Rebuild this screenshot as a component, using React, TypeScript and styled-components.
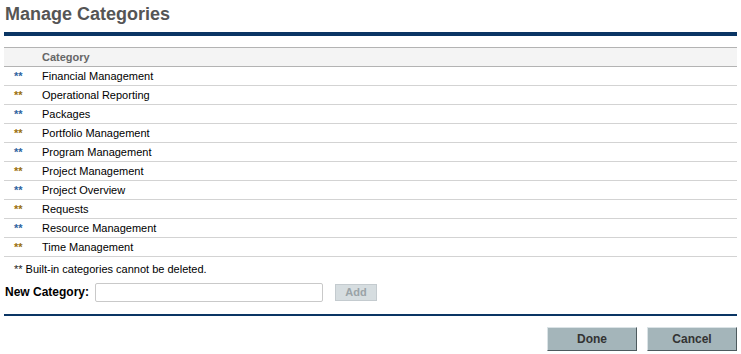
import styled, { createGlobalStyle } from "styled-components"

const GlobalStyle = createGlobalStyle`
    body {
        margin: 0;
        background: #fff;
        font-family: "Liberation Sans", Arial, sans-serif;
        font-size: 11px;
        color: #000;
    }
`

const Page = styled.div`
    width: 741px;
    height: 354px;
    padding: 0 4px;
    box-sizing: border-box;
`

const Title = styled.h1`
    margin: 0;
    padding: 4px 0 0 1px;
    height: 32px;
    box-sizing: border-box;
    font-size: 18px;
    font-weight: bold;
    color: #555;
    line-height: 20px;
`

const Rule = styled.div<{ $h: number }>`
    height: ${p => p.$h}px;
    background: #0a3564;
    width: 733px;
`

const Table = styled.table`
    width: 733px;
    margin-top: 11px;
    border-collapse: collapse;
    th, td {
        padding: 0;
        height: 18px;
        text-align: left;
        white-space: nowrap;
    }
    th {
        background: #f4f4f4;
        border-top: 1px solid #b3b3b3;
        border-bottom: 1px solid #b3b3b3;
        color: #666;
        font-weight: bold;
        font-size: 11px;
    }
    td {
        border-bottom: 1px solid #d3d3d3;
    }
`

const Mark = styled.td<{ $tone: "blue" | "gold" }>`
    width: 28px;
    padding-left: 10px !important;
    font-size: 11px;
    font-weight: bold;
    color: ${p => (p.$tone === "blue" ? "#2f64a0" : "#9a6f0e")};
`

const Note = styled.div`
    padding: 5px 0 0 10px;
    height: 20px;
    box-sizing: border-box;
    line-height: 14px;
    span {
        color: #222;
    }
`

const FormRow = styled.div`
    display: flex;
    align-items: center;
    height: 30px;
    margin-bottom: 7px;
    padding-left: 1px;
`

const Label = styled.label`
    width: 90px;
    font-weight: bold;
    font-size: 12px;
    color: #000;
`

const TextInput = styled.input`
    width: 228px;
    height: 19px;
    box-sizing: border-box;
    border: 1px solid #c9c9c9;
    border-radius: 2px;
    padding: 0 3px;
    margin: 0 12px 0 0;
`

const AddButton = styled.button`
    width: 42px;
    height: 17px;
    box-sizing: border-box;
    background: #d6dde0;
    border: 1px solid #c4cbcf;
    font-family: inherit;
    font-size: 11px;
    font-weight: bold;
    color: #9aa3a7;
    padding: 0;
`

const Actions = styled.div`
    display: flex;
    justify-content: flex-end;
    gap: 10px;
    padding-top: 11px;
`

const ActionButton = styled.button`
    width: 90px;
    height: 24px;
    box-sizing: border-box;
    background: #a4b5ba;
    border: 1px solid;
    border-color: #dbe3e6 #4d5a5e #4d5a5e #dbe3e6;
    font-family: inherit;
    font-size: 12px;
    font-weight: bold;
    color: #333;
    padding: 0;
`

const categories: [string, "blue" | "gold"][] = [
    ["Financial Management", "blue"],
    ["Operational Reporting", "gold"],
    ["Packages", "blue"],
    ["Portfolio Management", "gold"],
    ["Program Management", "blue"],
    ["Project Management", "gold"],
    ["Project Overview", "blue"],
    ["Requests", "gold"],
    ["Resource Management", "blue"],
    ["Time Management", "gold"],
]

const App = () => (
    <>
        <GlobalStyle />
        <Page>
            <Title>Manage Categories</Title>
            <Rule $h={4} />
            <Table>
                <thead>
                    <tr>
                        <th style={{ width: 38 }}></th>
                        <th>Category</th>
                    </tr>
                </thead>
                <tbody>
                    {categories.map(([name, tone]) => (
                        <tr key={name}>
                            <Mark $tone={tone}>**</Mark>
                            <td>{name}</td>
                        </tr>
                    ))}
                </tbody>
            </Table>
            <Note><span>**</span> Built-in categories cannot be deleted.</Note>
            <FormRow>
                <Label>New Category:</Label>
                <TextInput type="text" />
                <AddButton disabled>Add</AddButton>
            </FormRow>
            <Rule $h={2} />
            <Actions>
                <ActionButton>Done</ActionButton>
                <ActionButton>Cancel</ActionButton>
            </Actions>
        </Page>
    </>
)

export default App
